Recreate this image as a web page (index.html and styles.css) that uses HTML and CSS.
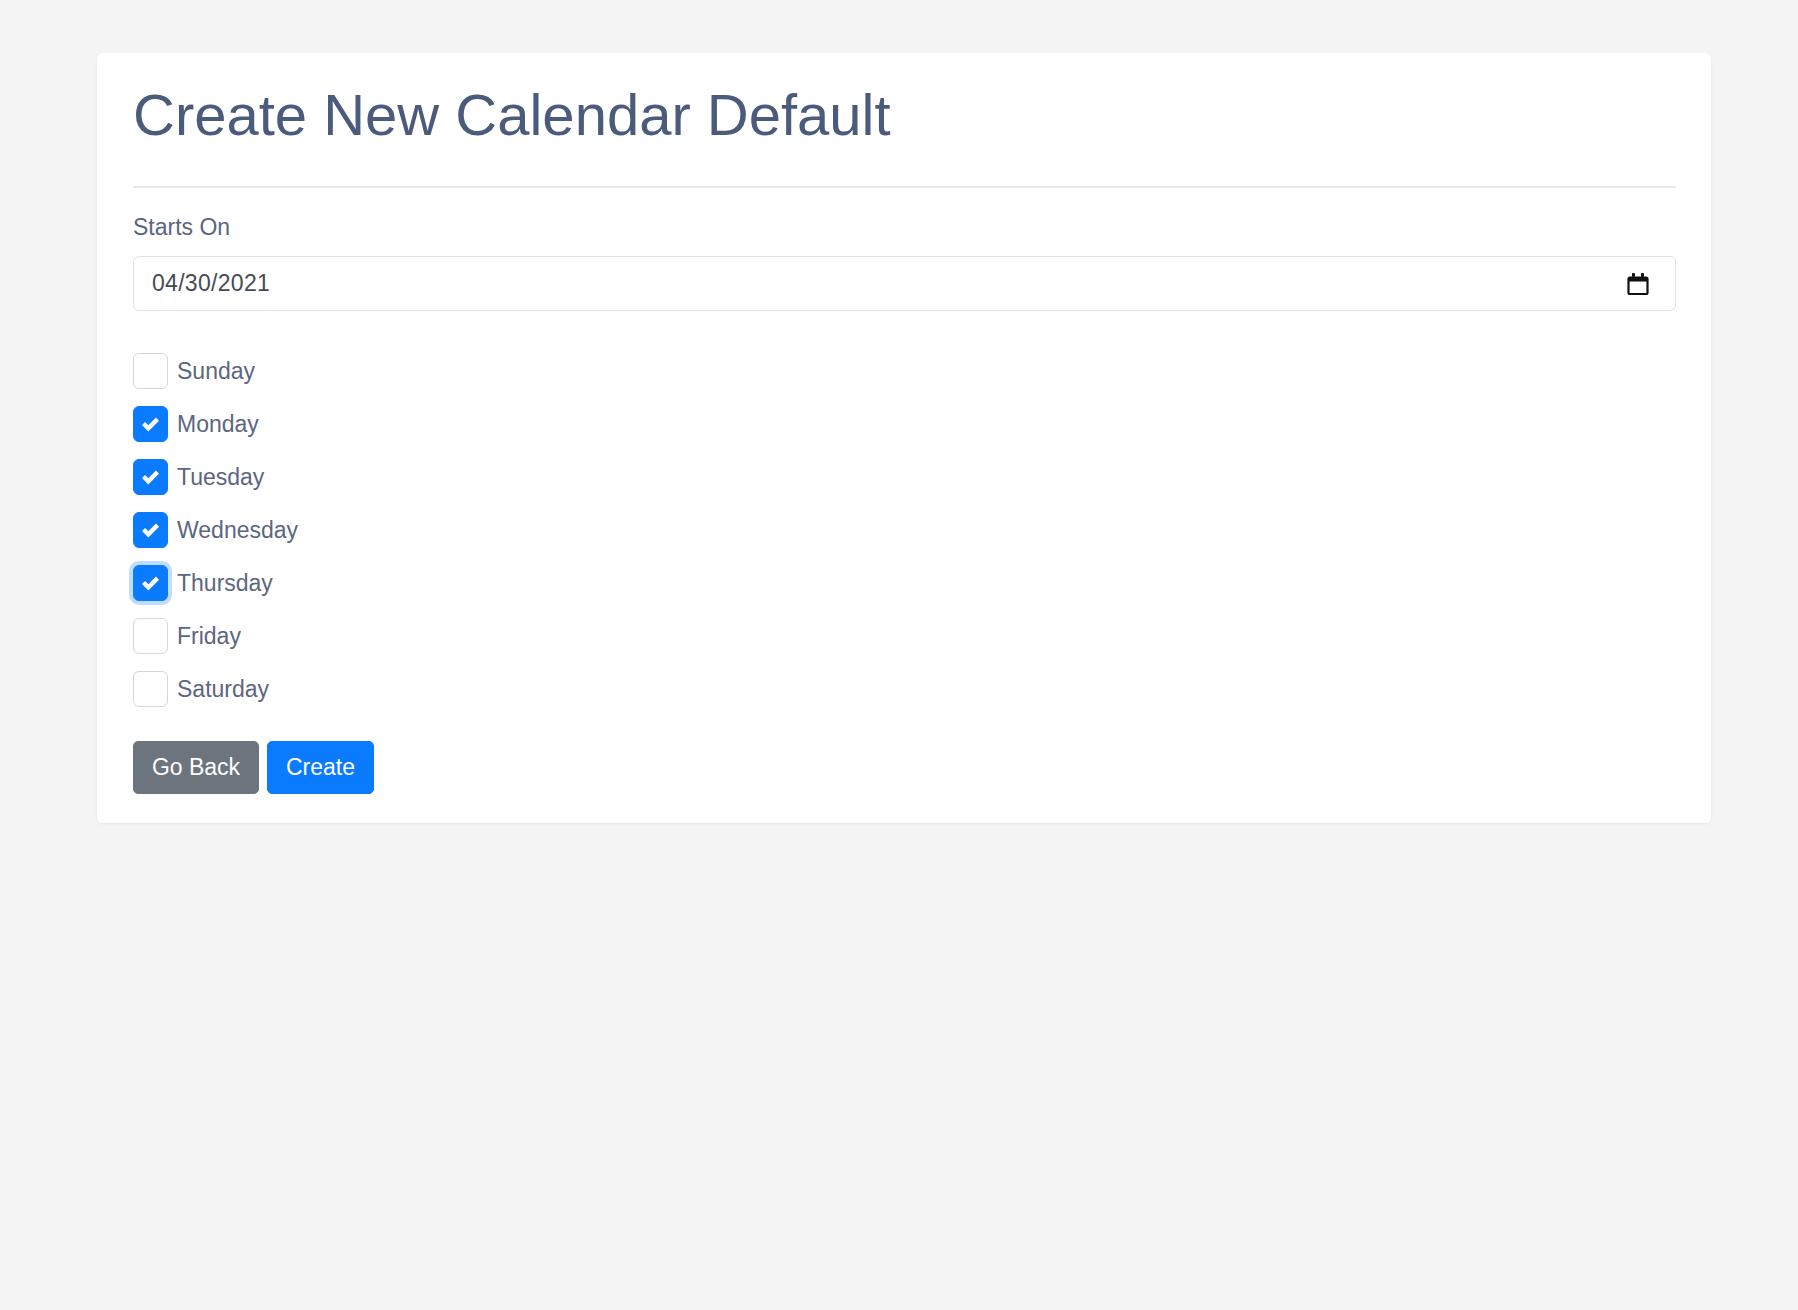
FILE: index.html
```html
<!DOCTYPE html>
<html lang="en">
<head>
<meta charset="utf-8">
<title>Create New Calendar Default</title>
<link rel="stylesheet" href="styles.css">
</head>
<body>
<main class="card">
  <h1 class="title">Create New Calendar Default</h1>
  <hr class="rule">
  <form class="form">
    <label class="field-label">Starts On</label>
    <div class="date-input">
      <span class="date-value">04/30/2021</span>
      <svg class="cal-icon" width="22" height="24" viewBox="0 0 22 24" aria-hidden="true">
        <rect x="5" y="1" width="3" height="4" rx="1" fill="#111"/>
        <rect x="14" y="1" width="3" height="4" rx="1" fill="#111"/>
        <path d="M3 5.5 H19 A1.5 1.5 0 0 1 20.5 7 V20.5 A1.5 1.5 0 0 1 19 22 H3 A1.5 1.5 0 0 1 1.5 20.5 V7 A1.5 1.5 0 0 1 3 5.5 Z" fill="none" stroke="#111" stroke-width="2.2"/>
        <rect x="1.5" y="5.5" width="19" height="4" fill="#111"/>
      </svg>
    </div>

    <div class="days">
      <div class="check-row"><span class="box"></span><span class="day">Sunday</span></div>
      <div class="check-row"><span class="box checked"></span><span class="day">Monday</span></div>
      <div class="check-row"><span class="box checked"></span><span class="day">Tuesday</span></div>
      <div class="check-row"><span class="box checked"></span><span class="day">Wednesday</span></div>
      <div class="check-row"><span class="box checked focused"></span><span class="day">Thursday</span></div>
      <div class="check-row"><span class="box"></span><span class="day">Friday</span></div>
      <div class="check-row last"><span class="box"></span><span class="day">Saturday</span></div>
    </div>

    <div class="actions">
      <button type="button" class="btn btn-secondary">Go Back</button>
      <button type="button" class="btn btn-primary">Create</button>
    </div>
  </form>
</main>
</body>
</html>
```

FILE: styles.css
```css
* { box-sizing: border-box; }

html, body {
  margin: 0;
  padding: 0;
  background: #f4f4f4;
  font-family: "Liberation Sans", Arial, sans-serif;
}

body {
  padding: 53px 87px 0 97px;
  min-height: 1310px;
}

.card {
  background: #fff;
  border-radius: 6px;
  box-shadow: 0 1px 3px rgba(0, 0, 0, 0.06);
  padding: 27px 35px 29px 36px;
}

.title {
  margin: 0;
  font-size: 58px;
  font-weight: 400;
  line-height: 70px;
  color: #4b5b7c;
}

.rule {
  margin: 36px 0 0 0;
  border: 0;
  border-top: 2px solid #e6e7e9;
  height: 0;
}

.form {
  display: flex;
  flex-direction: column;
}

.field-label {
  margin-top: 22px;
  font-size: 23px;
  line-height: 34px;
  color: #5b6680;
}

.date-input {
  margin-top: 12px;
  height: 55px;
  border: 1px solid #dfe2e6;
  border-radius: 6px;
  display: flex;
  align-items: center;
  justify-content: space-between;
  padding: 0 26px 0 18px;
}

.date-value {
  font-size: 23px;
  color: #454b55;
  letter-spacing: 0.3px;
}

.cal-icon {
  display: block;
}

.days {
  margin-top: 42px;
  display: flex;
  flex-direction: column;
}

.check-row {
  height: 53px;
  display: flex;
  align-items: flex-start;
  gap: 9px;
}

.check-row.last {
  height: 36px;
}

.box {
  width: 35px;
  height: 36px;
  border: 1px solid #d3d7dc;
  border-radius: 6px;
  background: #fff;
  flex: none;
}

.box.checked {
  border-color: #0a7bff;
  background-color: #0a7bff;
  background-image: url("data:image/svg+xml,%3csvg xmlns='http://www.w3.org/2000/svg' viewBox='0 0 8 8'%3e%3cpath fill='%23fff' d='M6.564.75l-3.59 3.612-1.538-1.55L0 4.26 2.974 7.25 8 2.193z'/%3e%3c/svg%3e");
  background-repeat: no-repeat;
  background-position: center;
  background-size: 17px 17px;
}

.box.focused {
  box-shadow: 0 0 0 4px rgba(0, 123, 255, 0.25);
}

.day {
  font-size: 23px;
  line-height: 36px;
  color: #5b6680;
}

.actions {
  margin-top: 34px;
  display: flex;
  gap: 8px;
}

.btn {
  height: 53px;
  padding: 0;
  border: 1px solid transparent;
  border-radius: 5px;
  font-family: "Liberation Sans", Arial, sans-serif;
  font-size: 23px;
  color: #fff;
  white-space: nowrap;
  cursor: pointer;
}

.btn-secondary {
  background: #6c757d;
  border-color: #6c757d;
  width: 126px;
}

.btn-primary {
  background: #0a7bff;
  border-color: #0a7bff;
  width: 107px;
}
```
